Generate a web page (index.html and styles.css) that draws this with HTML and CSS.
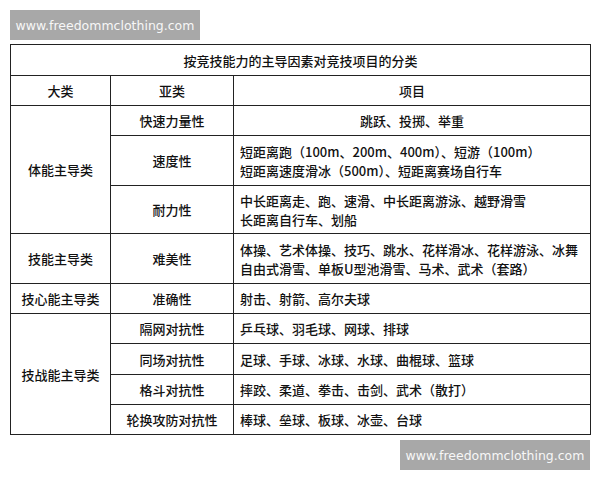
FILE: index.html
```html
<!DOCTYPE html>
<html lang="zh">
<head>
<meta charset="utf-8">
<link rel="stylesheet" href="styles.css">
</head>
<body>
<div class="page">
  <div class="mark mark-top">www.freedommclothing.com</div>
  <table class="sheet">
    <colgroup>
      <col class="c1"><col class="c2"><col class="c3">
    </colgroup>
    <tr class="r-title"><td colspan="3" class="center">按竞技能力的主导因素对竞技项目的分类</td></tr>
    <tr class="r30"><td class="center">大类</td><td class="center">亚类</td><td class="center">项目</td></tr>
    <tr class="r30"><td rowspan="3" class="center">体能主导类</td><td class="center">快速力量性</td><td class="center">跳跃、投掷、举重</td></tr>
    <tr class="r50"><td class="center">速度性</td><td class="items">短距离跑（100m、200m、400m）、短游（100m）<br>短距离速度滑冰（500m）、短距离赛场自行车</td></tr>
    <tr class="r48"><td class="center">耐力性</td><td class="items">中长距离走、跑、速滑、中长距离游泳、越野滑雪<br>长距离自行车、划船</td></tr>
    <tr class="r50"><td class="center">技能主导类</td><td class="center">难美性</td><td class="items">体操、艺术体操、技巧、跳水、花样滑冰、花样游泳、冰舞<br>自由式滑雪、单板U型池滑雪、马术、武术（套路）</td></tr>
    <tr class="r30"><td class="center">技心能主导类</td><td class="center">准确性</td><td class="items">射击、射箭、高尔夫球</td></tr>
    <tr class="r30"><td rowspan="4" class="center">技战能主导类</td><td class="center">隔网对抗性</td><td class="items">乒乓球、羽毛球、网球、排球</td></tr>
    <tr class="r31"><td class="center">同场对抗性</td><td class="items">足球、手球、冰球、水球、曲棍球、篮球</td></tr>
    <tr class="r30"><td class="center">格斗对抗性</td><td class="items">摔跤、柔道、拳击、击剑、武术（散打）</td></tr>
    <tr class="r30"><td class="center">轮换攻防对抗性</td><td class="items">棒球、垒球、板球、冰壶、台球</td></tr>
  </table>
  <div class="mark mark-bottom">www.freedommclothing.com</div>
</div>
</body>
</html>
```

FILE: styles.css
```css
html, body {
  margin: 0;
  padding: 0;
  background: #ffffff;
}

.page {
  width: 600px;
  height: 480px;
  padding-top: 10px;
  box-sizing: border-box;
  display: flex;
  flex-direction: column;
  font-family: "Noto Sans CJK SC", "Noto Sans", sans-serif;
  color: #111111;
}

.mark {
  width: 190px;
  height: 30px;
  background: #a8a8a8;
  color: #f7f7f7;
  font-family: "DejaVu Sans", sans-serif;
  font-size: 12.5px;
  display: flex;
  align-items: center;
  justify-content: center;
}

.mark-top {
  margin-left: 10px;
}

.mark-bottom {
  align-self: flex-end;
  margin-right: 10px;
  margin-top: 5px;
}

.sheet {
  margin: 4px 0 0 10px;
  width: 580px;
  border-collapse: collapse;
  table-layout: fixed;
  font-size: 13px;
  font-weight: 500;
}

.c1 { width: 100px; }
.c2 { width: 123px; }
.c3 { width: 357px; }

.sheet td {
  border: 1.5px solid #222222;
  padding: 0;
  vertical-align: middle;
  line-height: 19px;
}

.center {
  text-align: center;
}

.items {
  text-align: left;
  padding-left: 6px !important;
  white-space: nowrap;
}

.r-title td { height: 30px; }
.r30 td { height: 29px; }
.r31 td { height: 30px; }
.r48 td { height: 47px; }
.r50 td { height: 49px; }
```
